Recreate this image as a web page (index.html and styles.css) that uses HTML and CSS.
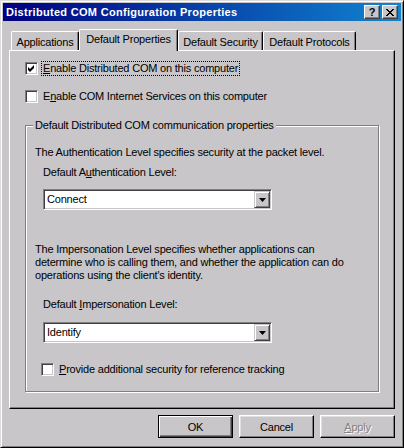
FILE: index.html
```html
<!DOCTYPE html>
<html>
<head>
<meta charset="utf-8">
<link rel="stylesheet" href="styles.css">
</head>
<body>
<div class="window">
  <div class="titlebar">
    <span class="title">Distributed COM Configuration Properties</span>
    <div class="tb-buttons">
      <div class="tb-btn help">?</div>
      <div class="tb-btn close">
        <svg width="8" height="7" viewBox="0 0 8 7"><path d="M0 0h2v1h1v1h2v-1h1v-1h2v1h-1v1h-1v1h-1v1h1v1h1v1h1v1h-2v-1h-1v-1h-2v1h-1v1h-2v-1h1v-1h1v-1h1v-1h-1v-1h-1v-1h-1z" fill="#000"/></svg>
      </div>
    </div>
  </div>
  <div class="main">
    <div class="tabs">
      <div class="tab t-apps">Applications</div>
      <div class="tab active t-props">Default Properties</div>
      <div class="tab t-sec">Default Security</div>
      <div class="tab t-proto">Default Protocols</div>
    </div>
    <div class="panel">
      <div class="check-row row1">
        <span class="checkbox"><svg width="11" height="11" viewBox="0 0 11 11"><polygon points="2,4 4,6 8,2 8,5 4,9 2,7" fill="#000"/></svg></span>
        <span class="label focus"><u>E</u>nable Distributed COM on this computer</span>
      </div>
      <div class="check-row row2">
        <span class="checkbox"></span>
        <span class="label">E<u>n</u>able COM Internet Services on this computer</span>
      </div>
      <div class="group">
        <div class="group-title">Default Distributed COM communication properties</div>
        <p class="desc d1">The Authentication Level specifies security at the packet level.</p>
        <div class="field-label l1">Default A<u>u</u>thentication Level:</div>
        <div class="combo c1">
          <span class="combo-value">Connect</span>
          <span class="combo-btn"><svg width="7" height="4" viewBox="0 0 7 4"><polygon points="0,0 7,0 3.5,4" fill="#000"/></svg></span>
        </div>
        <p class="desc d2">The Impersonation Level specifies whether applications can<br>determine who is calling them, and whether the application can do<br>operations using the client's identity.</p>
        <div class="field-label l2">Default <u>I</u>mpersonation Level:</div>
        <div class="combo c2">
          <span class="combo-value">Identify</span>
          <span class="combo-btn"><svg width="7" height="4" viewBox="0 0 7 4"><polygon points="0,0 7,0 3.5,4" fill="#000"/></svg></span>
        </div>
        <div class="check-row row3">
          <span class="checkbox"></span>
          <span class="label"><u>P</u>rovide additional security for reference tracking</span>
        </div>
      </div>
    </div>
    <div class="buttons">
      <div class="btn default">OK</div>
      <div class="btn">Cancel</div>
      <div class="btn disabled"><u>A</u>pply</div>
    </div>
  </div>
</div>
</body>
</html>
```
FILE: styles.css
```css
html, body {
  margin: 0;
  padding: 0;
  background: #c8c6c8;
}
body {
  font-family: "Liberation Sans", Arial, sans-serif;
  font-size: 11px;
  letter-spacing: -0.2px;
  color: #000;
}
.window {
  width: 404px;
  height: 448px;
  box-sizing: border-box;
  background: #c8c6c8;
  border: 1px solid;
  border-color: #dcdcdc #000 #000 #dcdcdc;
  box-shadow: inset 1px 1px #fff, inset -1px -1px #808080;
  padding: 2px;
}
.titlebar {
  height: 18px;
  display: flex;
  align-items: center;
  justify-content: space-between;
  background: linear-gradient(to right, #000080, #1084d0);
  padding: 0 3px 0 3px;
}
.title {
  color: #fff;
  font-weight: bold;
  font-size: 11px;
  letter-spacing: 0.3px;
  white-space: nowrap;
}
.tb-buttons {
  display: flex;
  gap: 2px;
}
.tb-btn {
  width: 16px;
  height: 14px;
  box-sizing: border-box;
  background: #c8c6c8;
  border: 1px solid;
  border-color: #fff #404040 #404040 #fff;
  box-shadow: inset -1px -1px #808080;
  display: flex;
  align-items: center;
  justify-content: center;
  font-weight: bold;
  font-size: 11px;
  letter-spacing: 0;
  line-height: 12px;
}
.main {
  padding: 8px 0 0 6px;
}
.tabs {
  display: flex;
  align-items: flex-end;
  height: 21px;
  padding-left: 2px;
}
.tab {
  height: 19px;
  box-sizing: border-box;
  border-left: 1px solid #fff;
  border-top: 1px solid #fff;
  border-right: 1px solid #000;
  border-top-left-radius: 2px;
  border-top-right-radius: 2px;
  box-shadow: inset -1px 0 #808080;
  display: flex;
  align-items: center;
  justify-content: center;
  white-space: nowrap;
  padding-top: 1px;
}
.tab.active {
  height: 22px;
  margin-bottom: -1px;
  position: relative;
  z-index: 1;
  background: #c8c6c8;
  padding-top: 0;
  padding-bottom: 3px;
}
.t-apps { width: 68px; }
.t-props { width: 99px; }
.t-sec { width: 85px; }
.t-proto { width: 93px; }
.panel {
  width: 386px;
  height: 359px;
  box-sizing: border-box;
  border: 1px solid;
  border-color: #fff #000 #000 #fff;
  box-shadow: inset -1px -1px #808080;
  padding: 11px 0 0 15px;
}
.check-row {
  display: flex;
  align-items: center;
  height: 13px;
}
.checkbox {
  width: 13px;
  height: 13px;
  box-sizing: border-box;
  background: #fff;
  border: 1px solid;
  border-color: #808080 #fff #fff #808080;
  box-shadow: inset 1px 1px #404040, inset -1px -1px #c8c6c8;
  display: flex;
  align-items: center;
  justify-content: center;
  flex: none;
}
.label {
  margin-left: 5px;
  line-height: 13px;
  white-space: nowrap;
}
.label.focus {
  margin-left: 4px;
  padding: 0 1px;
  outline: 1px dotted #000;
  outline-offset: 0;
}
.row2 { margin-top: 15px; }
.group {
  margin-top: 22px;
  width: 354px;
  height: 267px;
  box-sizing: border-box;
  border: 1px solid #808080;
  box-shadow: inset 1px 1px #fff, 1px 1px #fff;
}
.group-title {
  margin: -7px 0 0 7px;
  padding: 0 2px;
  width: fit-content;
  background: #c8c6c8;
  line-height: 13px;
  white-space: nowrap;
}
.desc {
  margin: 0;
  padding-left: 9px;
  line-height: 13px;
  white-space: nowrap;
}
.d1 { margin-top: 14px; }
.d2 { margin-top: 33px; }
.field-label {
  padding-left: 17px;
  line-height: 13px;
  white-space: nowrap;
}
.l1 { margin-top: 7px; }
.l2 { margin-top: 16px; }
.combo {
  margin-left: 17px;
  width: 229px;
  height: 21px;
  box-sizing: border-box;
  border: 1px solid;
  border-color: #808080 #fff #fff #808080;
  box-shadow: inset 1px 1px #404040, inset -1px -1px #c8c6c8;
  background: #fff;
  padding: 1px;
  display: flex;
  align-items: center;
}
.c1 { margin-top: 10px; }
.c2 { margin-top: 11px; }
.combo-value {
  flex: 1;
  padding-left: 2px;
  line-height: 17px;
}
.combo-btn {
  width: 16px;
  height: 17px;
  box-sizing: border-box;
  background: #c8c6c8;
  border: 1px solid;
  border-color: #c8c6c8 #404040 #404040 #c8c6c8;
  box-shadow: inset 1px 1px #fff, inset -1px -1px #808080;
  display: flex;
  align-items: center;
  justify-content: center;
}
.row3 {
  margin-top: 20px;
  margin-left: 15px;
}
.buttons {
  width: 386px;
  margin-top: 6px;
  display: flex;
  justify-content: flex-end;
  gap: 6px;
}
.btn {
  width: 75px;
  height: 23px;
  box-sizing: border-box;
  border: 1px solid;
  border-color: #fff #000 #000 #fff;
  box-shadow: inset -1px -1px #808080, inset 1px 1px #e0e0e0;
  display: flex;
  align-items: center;
  justify-content: center;
}
.btn.default {
  border: 1px solid #000;
  box-shadow: inset 1px 1px #fff, inset -1px -1px #404040, inset -2px -2px #808080;
}
.btn.disabled {
  color: #808080;
  text-shadow: 1px 1px #fff;
}
```
